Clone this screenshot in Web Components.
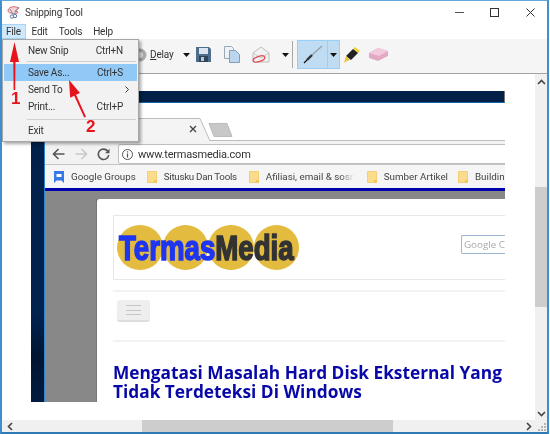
<!DOCTYPE html>
<html>
<head>
<meta charset="utf-8">
<title>Snipping Tool</title>
<style>
  html, body { margin: 0; background: #fff; }
  body { font-family: Roboto, "Open Sans", sans-serif; }
</style>
</head>
<body>

<snip-window>
  <title-bar slot="title">Snipping Tool</title-bar>
  <menu-bar slot="menu"></menu-bar>
  <snip-toolbar slot="toolbar"></snip-toolbar>
  <capture-view slot="canvas"></capture-view>
  <file-menu slot="overlay"></file-menu>
  <arrow-notes slot="overlay"></arrow-notes>
</snip-window>

<script>
class SnipWindow extends HTMLElement {
  constructor() {
    super();
    this.attachShadow({ mode: "open" });
  }

  connectedCallback() {
    this.shadowRoot.innerHTML = /* html */`
      <style>
        :host {
          display: block;
          position: relative;
          width: 549px;
          height: 434px;
          box-sizing: border-box;
          background: #fff;
          overflow: hidden;
          filter: blur(.3px);
          border-top: 1px solid #62a8e0;
          border-left: 2px solid #3f8fd0;
          border-right: 2px solid #3f8fd0;
          border-bottom: 2px solid #2f79b4;
        }
        .frame { display: flex; flex-direction: column; height: 100%; }
        .work {
          flex: 1;
          min-height: 0;
          display: grid;
          grid-template-columns: 1fr 12px;
          grid-template-rows: 1fr 12px;
        }
        .v, .h, .corner { background: #f0f0f0; position: relative; }
        .v { display: flex; flex-direction: column; align-items: center; justify-content: space-between; padding: 5px 0 3px; box-sizing: border-box; }
        .thumb-v { position: absolute; left: 0; right: 0; top: 113px; height: 120px; background: #cdcdcd; }
        .h { display: flex; align-items: center; justify-content: space-between; padding: 0 3px 0 5px; }
        .thumb-h { position: absolute; top: 0; bottom: 0; left: 140px; width: 251px; background: #cdcdcd; }
        svg { display: block; }
      </style>
      <div class="frame">
        <slot name="title"></slot>
        <slot name="menu"></slot>
        <slot name="toolbar"></slot>
        <div class="work">
          <slot name="canvas"></slot>
          <div class="v">
            <div class="thumb-v"></div>
            <svg width="9" height="6" viewBox="0 0 9 6"><path d="M1 5l3.500-3.500L8 5" fill="none" stroke="#444" stroke-width="1.600"/></svg>
            <svg width="9" height="6" viewBox="0 0 9 6"><path d="M1 1l3.500 3.500L8 1" fill="none" stroke="#444" stroke-width="1.600"/></svg>
          </div>
          <div class="h">
            <div class="thumb-h"></div>
            <svg width="6" height="9" viewBox="0 0 6 9"><path d="M5 1L1.500 4.500 5 8" fill="none" stroke="#444" stroke-width="1.600"/></svg>
            <svg width="6" height="9" viewBox="0 0 6 9"><path d="M1 1l3.500 3.500L1 8" fill="none" stroke="#444" stroke-width="1.600"/></svg>
          </div>
          <div class="corner">
            <svg width="12" height="12" viewBox="0 0 12 12" fill="#b5b5b5"><rect x="9" y="9" width="2" height="2"/><rect x="6" y="9" width="2" height="2"/><rect x="3" y="9" width="2" height="2"/><rect x="9" y="6" width="2" height="2"/><rect x="6" y="6" width="2" height="2"/><rect x="9" y="3" width="2" height="2"/></svg>
          </div>
        </div>
      </div>
      <slot name="overlay"></slot>
    `;
  }
}

class TitleBar extends HTMLElement {
  constructor() {
    super();
    this.attachShadow({ mode: "open" });
  }

  connectedCallback() {
    this.shadowRoot.innerHTML = /* html */`
      <style>
        :host {
          display: flex;
          align-items: center;
          height: 23px;
          padding: 0 12px 0 5px;
          font-size: 10px;
          letter-spacing: -.2px;
          color: #333;
        }
        .name { margin-left: 2px; flex: 1; }
        .btns { display: flex; align-items: center; }
        svg { display: block; }
      </style>
      <svg width="16" height="16" viewBox="0 0 16 16" fill="none">
        <path d="M1 5c2-4 7-4 11-2-1 1-3 2-4 3l3 1c-1 3-5 2-7 1C2 8 1 7 1 5z" fill="#f6d3d6" stroke="#d9606a" stroke-width="1"/>
        <circle cx="8" cy="11" r="1.700" stroke="#5a7fa8"/>
        <circle cx="5" cy="11.500" r="1.700" stroke="#5a7fa8"/>
        <path d="M7 9l5-7M6 9L3 4" stroke="#7d93a8"/>
      </svg>
      <span class="name"><slot></slot></span>
      <div class="btns">
        <svg width="9" height="9" viewBox="0 0 9 9"><path d="M0 4.500h9" stroke="#555" stroke-width="1"/></svg>
        <svg style="margin-left:26px" width="9" height="9" viewBox="0 0 9 9"><rect x=".5" y=".5" width="8" height="8" fill="none" stroke="#333"/></svg>
        <svg style="margin-left:27px" width="9" height="9" viewBox="0 0 9 9"><path d="M.5.500l8 8M8.500.500l-8 8" stroke="#333" stroke-width="1"/></svg>
      </div>
    `;
  }
}

class MenuBar extends HTMLElement {
  constructor() {
    super();
    this.attachShadow({ mode: "open" });
  }

  connectedCallback() {
    this.shadowRoot.innerHTML = /* html */`
      <style>
        :host {
          display: flex;
          height: 15px;
          font-size: 10px;
          letter-spacing: -.2px;
          color: #333;
          align-items: stretch;
        }
        span { padding: 0 5.500px; line-height: 15px; }
        .on {
          background: #cfe8fb;
          box-shadow: inset 0 0 0 1px #a6d5f8;
          margin-left: -1px;
          padding: 0;
          width: 25px;
          text-align: center;
        }
      </style>
      <span class="on">File</span>
      <span>Edit</span>
      <span>Tools</span>
      <span>Help</span>
    `;
  }
}

class SnipToolbar extends HTMLElement {
  constructor() {
    super();
    this.attachShadow({ mode: "open" });
  }

  connectedCallback() {
    const drop = `<svg class="drop" width="7" height="4" viewBox="0 0 7 4"><path d="M0 0h7L3.500 4z" fill="#111"/></svg>`;
    this.shadowRoot.innerHTML = /* html */`
      <style>
        :host {
          display: flex;
          align-items: center;
          height: 31px;
          padding: 0 0 3px 133px;
          background: #f5f5f5;
          border-bottom: 1px solid #a3a3a3;
          font-size: 10px;
          letter-spacing: -.2px;
          color: #333;
        }
        svg { display: block; flex: none; }
        u { text-decoration-thickness: 1px; }
        .delay { margin-left: 2px; width: 22px; white-space: nowrap; }
        .sep { width: 1px; height: 27px; background: #a9a9a9; margin: 0 4px 0 3px; }
        .pen {
          width: 29px;
          height: 27px;
          background: #bfdcf3;
          border: 1px solid #99cff6;
          display: flex;
          align-items: center;
          justify-content: center;
        }
        .pen-drop {
          width: 11px;
          height: 27px;
          background: #bfdcf3;
          border: 1px solid #99cff6;
          border-left: 0;
          display: flex;
          align-items: center;
          justify-content: center;
        }
      </style>
      <svg width="13" height="16" viewBox="0 0 13 16"><circle cx="5" cy="8" r="6.500" fill="#aaa"/><circle cx="5" cy="8" r="3" fill="#ddd"/></svg>
      <span class="delay"><u>D</u>elay</span>
      <span style="width:11px"></span>
      ${drop}
      <svg style="margin-left:6px" width="15" height="15" viewBox="0 0 15 15">
        <path d="M0 0h13l2 2v13H0z" fill="#4d6e8c"/>
        <rect x="3" y="1" width="9" height="6" fill="#d9e4ee"/>
        <rect x="3" y="9" width="9" height="6" fill="#2f4558"/>
        <rect x="5" y="10" width="3" height="4" fill="#b9c8d6"/>
      </svg>
      <svg style="margin-left:13px" width="16" height="17" viewBox="0 0 16 17">
        <path d="M.5.500h7l2 2v10h-9z" fill="#eef2f7" stroke="#9aa7b5"/>
        <path d="M5.500 4.500h6l4 4v8h-10z" fill="#bcd6ef" stroke="#7f9cb8"/>
      </svg>
      <svg style="margin-left:12px" width="19" height="17" viewBox="0 0 19 17" fill="none">
        <path d="M1 7l8-6 8 6v9H1z" fill="#f2f2f2" stroke="#bdbdbd"/>
        <path d="M1 7l8 5 8-5" stroke="#c8c8c8"/>
        <ellipse cx="7" cy="13" rx="6" ry="2.600" transform="rotate(-18 7 13)" stroke="#e24a55" stroke-width="1.300"/>
      </svg>
      <span style="width:11px"></span>
      ${drop}
      <span class="sep"></span>
      <div class="pen">
        <svg width="20" height="19" viewBox="0 0 20 19">
          <path d="M19 1L9 10" stroke="#9aa3ac" stroke-width="1.600"/>
          <path d="M9 10l-5 5" stroke="#333" stroke-width="2.400"/>
          <path d="M4 15l-3 3" stroke="#111" stroke-width="1.200"/>
        </svg>
      </div>
      <div class="pen-drop">${drop}</div>
      <svg style="margin-left:3px" width="18" height="18" viewBox="0 0 18 18">
        <path d="M12 1l5 4-2 2-5-4z" fill="#f2cf3c"/>
        <path d="M10 3l5 4-7 7-5-4z" fill="#222"/>
        <path d="M3 10l4 4-3 1-3 2z" fill="#e8c33a"/>
      </svg>
      <svg style="margin-left:8px" width="19" height="13" viewBox="0 0 19 13">
        <path d="M0 5l9-5 10 3v5l-10 5-9-3z" fill="#e3a9c4"/>
        <path d="M0 5l9-5 10 3-9 5z" fill="#f3c9dc"/>
      </svg>
    `;
  }
}

class FileMenu extends HTMLElement {
  constructor() {
    super();
    this.attachShadow({ mode: "open" });
  }

  connectedCallback() {
    this.shadowRoot.innerHTML = /* html */`
      <style>
        :host {
          position: absolute;
          left: 0;
          top: 38px;
          width: 137px;
          height: 103px;
          box-sizing: border-box;
          background: #f2f2f2;
          border: 1px solid #a6a6a6;
          box-shadow: 2px 2px 3px rgba(0,0,0,.35);
          font-size: 10px;
          letter-spacing: -.2px;
          color: #333;
          padding-top: 2px;
        }
        .row {
          display: flex;
          justify-content: space-between;
          align-items: center;
          height: 17px;
          padding: 0 15px 0 25px;
          position: relative;
        }
        .on { background: #90c8f6; margin: 0 1px; padding: 0 14px 0 24px; }
        .sep { height: 1px; background: #d0d0d0; margin: 2px 2px 2px 24px; }
        .chev { position: absolute; right: 9px; top: 5px; }
      </style>
      <div class="row"><span>New Snip</span><span>Ctrl+N</span></div>
      <div class="sep"></div>
      <div class="row on"><span>Save As...</span><span>Ctrl+S</span></div>
      <div class="row"><span>Send To</span><svg class="chev" width="4" height="7" viewBox="0 0 4 7"><path d="M.5.500l3 3-3 3" fill="none" stroke="#333"/></svg></div>
      <div class="row"><span>Print...</span><span>Ctrl+P</span></div>
      <div class="sep" style="margin-top:4px"></div>
      <div class="row"><span>Exit</span></div>
    `;
  }
}

class BookmarkItem extends HTMLElement {
  constructor() {
    super();
    this.attachShadow({ mode: "open" });
  }

  connectedCallback() {
    this.shadowRoot.innerHTML = /* html */`
      <style>
        :host { display: flex; align-items: center; gap: 7px; white-space: nowrap; flex: none; }
        svg { display: block; flex: none; }
      </style>
      <svg width="10" height="12" viewBox="0 0 10 12"><path d="M.5.500h9v11h-9z" fill="#fbdc8c" stroke="#f4cf72"/><path d="M7 9h2.500v2.500H7z" fill="#f2c34f"/></svg>
      <slot></slot>
    `;
  }
}

class BrowserChrome extends HTMLElement {
  constructor() {
    super();
    this.attachShadow({ mode: "open" });
  }

  connectedCallback() {
    this.shadowRoot.innerHTML = /* html */`
      <style>
        :host { display: block; color: #444; font-size: 9.800px; }
        svg { display: block; flex: none; }
        .tabs {
          height: 38px;
          position: relative;
          border-bottom: 1px solid #bdbdbd;
          box-sizing: border-box;
        }
        .tab { position: absolute; left: 0; top: 15px; }
        .nav {
          height: 24px;
          background: #f2f2f2;
          display: flex;
          align-items: center;
          padding: 3px 0 0 7px;
          border-bottom: 1px solid #c4c4c4;
          box-sizing: border-box;
          overflow: hidden;
        }
        .addr {
          margin-left: 8px;
          flex: 1;
          height: 20px;
          margin-right: -20px;
          background: #fff;
          border: 1px solid #bfbfbf;
          border-radius: 2px;
          display: flex;
          align-items: center;
          padding-left: 3px;
          gap: 5px;
          font-size: 11px;
          letter-spacing: -.2px;
          color: #333;
          box-sizing: border-box;
        }
        .marks {
          height: 23px;
          background: #f5f5f5;
          display: flex;
          align-items: center;
          padding-left: 9px;
          overflow: hidden;
          white-space: nowrap;
        }
        .tight { letter-spacing: -.3px; }
        .fade {
          -webkit-mask-image: linear-gradient(90deg, #000 85%, transparent);
          mask-image: linear-gradient(90deg, #000 85%, transparent);
          display: block;
          width: 88px;
          overflow: hidden;
        }
        .rule { height: 3px; background: #0000ac; }
      </style>
      <div class="tabs">
        <svg class="tab" width="200" height="23" viewBox="0 0 200 23" fill="none">
          <path d="M0 .5h155L165 23H0z" fill="#f4f4f4"/>
          <path d="M0 .5h155L165 23" stroke="#bdbdbd"/>
          <path d="M145 8l6 6M151 8l-6 6" stroke="#444" stroke-width="1.300"/>
          <path d="M164 5.500h18l5 13h-18z" fill="#c8c8c8" stroke="#bcbcbc" stroke-linejoin="round"/>
        </svg>
      </div>
      <div class="nav">
        <svg width="13" height="12" viewBox="0 0 13 12"><path d="M12.500 6H2M6.500 1L1.500 6l5 5" fill="none" stroke="#555" stroke-width="1.600"/></svg>
        <svg style="margin-left:10px" width="13" height="12" viewBox="0 0 13 12"><path d="M.5 6H11M6.500 1l5 5-5 5" fill="none" stroke="#c9c9c9" stroke-width="1.600"/></svg>
        <svg style="margin-left:9px" width="13" height="13" viewBox="0 0 13 13"><path d="M11 3.600A5.200 5.200 0 1 0 11.700 7" fill="none" stroke="#555" stroke-width="1.600"/><path d="M12.500 .8v4.400H8z" fill="#555"/></svg>
        <div class="addr">
          <svg width="11" height="11" viewBox="0 0 11 11"><circle cx="5.500" cy="5.500" r="5" fill="none" stroke="#555"/><path d="M5.500 4.500V8.500M5.500 2.300v1.200" stroke="#555" stroke-width="1.200"/></svg>
          <span>www.termasmedia.com</span>
        </div>
      </div>
      <div class="marks">
        <svg width="10" height="12" viewBox="0 0 10 12" style="margin-right:7px"><path d="M0 0h10v12L7.500 9.500h-5L0 12z" fill="#3b78e7"/><rect x="2.500" y="3" width="5" height="3" fill="#fff"/></svg>
        <span>Google Groups</span>
        <bookmark-item style="margin-left:11px"><span class="tight">Situsku Dan Tools</span></bookmark-item>
        <bookmark-item style="margin-left:12px"><span class="fade">Afiliasi, email &amp; sosm</span></bookmark-item>
        <bookmark-item style="margin-left:13px">Sumber Artikel</bookmark-item>
        <bookmark-item style="margin-left:10px">Building</bookmark-item>
      </div>
      <div class="rule"></div>
    `;
  }
}

class SiteLogo extends HTMLElement {
  constructor() {
    super();
    this.attachShadow({ mode: "open" });
  }

  connectedCallback() {
    this.shadowRoot.innerHTML = /* html */`
      <style>
        :host { display: block; position: relative; height: 65px; border: 1px solid #e8e8e8; border-right: 0; box-sizing: border-box; }
        .dots { display: flex; padding: 9px 0 0 3px; }
        .dots i { width: 45.500px; height: 45px; border-radius: 50%; background: #e3bc3f; flex: none; }
        .word {
          position: absolute;
          left: 5px;
          top: 11px;
          font: bold 35px/41px "Liberation Sans", sans-serif;
          transform: scaleX(.79);
          transform-origin: 0 0;
          -webkit-text-stroke: 1.600px currentColor;
          white-space: nowrap;
          color: #333;
        }
        .word b { color: #1f35f0; font-weight: bold; }
      </style>
      <div class="dots"><i></i><i></i><i></i><i></i></div>
      <div class="word"><b>Termas</b>Media</div>
    `;
  }
}

class CaptureView extends HTMLElement {
  constructor() {
    super();
    this.attachShadow({ mode: "open" });
  }

  connectedCallback() {
    this.shadowRoot.innerHTML = /* html */`
      <style>
        :host {
          display: block;
          background: #fff;
          padding: 17px 0 0 29px;
          overflow: hidden;
        }
        .shot {
          width: 474px;
          height: 311px;
          display: flex;
          flex-direction: column;
          overflow: hidden;
        }
        .top { height: 12px; background: #022048; border-bottom: 1px solid #1464a8; border-right: 1px solid #777; box-sizing: border-box; flex: none; }
        .row { flex: 1; display: flex; min-height: 0; }
        .strip { width: 14px; flex: none; background: linear-gradient(#022048, #012350 70%, #011532 85%, #011c40); border-right: 1px solid #2d86cf; box-sizing: border-box; }
        .main { flex: 1; min-width: 0; display: flex; flex-direction: column; }
        .page { flex: 1; display: flex; background: #888; padding-top: 8px; min-height: 0; }
        .gutter { width: 52px; flex: none; border-right: 1px solid #777; box-sizing: border-box; }
        .card {
          flex: 1;
          min-width: 0;
          background: #fff;
          border-radius: 3px 0 0 0;
          padding: 16px 0 0 16px;
          overflow: hidden;
        }
        .head { position: relative; }
        .search {
          position: absolute;
          right: 0;
          top: 20px;
          width: 44px;
          height: 19px;
          border: 1px solid #9db6d2;
          border-right: 0;
          border-radius: 2px 0 0 2px;
          font: 9.800px/18px "Open Sans", sans-serif;
          color: #aaa;
          padding-left: 2px;
          overflow: hidden;
          box-sizing: border-box;
          white-space: nowrap;
        }
        .line { height: 2px; background: #f2f2f2; }
        .bar { height: 48px; padding: 8px 0 0 4px; box-sizing: border-box; }
        .burger {
          width: 33px;
          height: 22px;
          background: #eee;
          border-radius: 3px;
          border-bottom: 2px solid #ddd;
          box-sizing: border-box;
          display: flex;
          flex-direction: column;
          gap: 3.500px;
          align-items: center;
          justify-content: center;
        }
        .burger i { width: 15px; height: 1px; background: #c6c6c6; display: block; }
        h1 {
          margin: 21px 0 0;
          font: bold 17.300px/19px "Open Sans", sans-serif;
          color: #0808a8;
          white-space: nowrap;
        }
      </style>
      <div class="shot">
        <div class="top"></div>
        <div class="row">
          <div class="strip"></div>
          <div class="main">
            <browser-chrome></browser-chrome>
            <div class="page">
              <div class="gutter"></div>
              <div class="card">
                <div class="head">
                  <site-logo></site-logo>
                  <div class="search">Google C</div>
                </div>
                <div class="line" style="margin-top:10px"></div>
                <div class="bar"><div class="burger"><i></i><i></i><i></i></div></div>
                <div class="line"></div>
                <h1>Mengatasi Masalah Hard Disk Eksternal Yang<br>Tidak Terdeteksi Di Windows</h1>
              </div>
            </div>
          </div>
        </div>
      </div>
    `;
  }
}

class ArrowNotes extends HTMLElement {
  constructor() {
    super();
    this.attachShadow({ mode: "open" });
  }

  connectedCallback() {
    this.shadowRoot.innerHTML = /* html */`
      <style>
        :host { position: absolute; left: -2px; top: -1px; width: 550px; height: 434px; pointer-events: none; }
        svg { position: absolute; left: 0; top: 0; }
        b {
          position: absolute;
          font: bold 17px/18px "Liberation Sans", sans-serif;
          color: #e8141c;
        }
      </style>
      <svg width="550" height="434" viewBox="0 0 550 434">
        <path d="M14.500 42l4.500 20h-3.500l-.3 28h-1.600l-.3-28H10z" fill="#e8141c"/>
        <path d="M69 80l11 13-4 1.800 10 22-1.800 .8-10-21.800-4 2z" fill="#e8141c"/>
      </svg>
      <b style="left:11px;top:90px">1</b>
      <b style="left:86px;top:118px">2</b>
    `;
  }
}

customElements.define("snip-window", SnipWindow);
customElements.define("title-bar", TitleBar);
customElements.define("menu-bar", MenuBar);
customElements.define("snip-toolbar", SnipToolbar);
customElements.define("file-menu", FileMenu);
customElements.define("bookmark-item", BookmarkItem);
customElements.define("browser-chrome", BrowserChrome);
customElements.define("site-logo", SiteLogo);
customElements.define("capture-view", CaptureView);
customElements.define("arrow-notes", ArrowNotes);
</script>
</body>
</html>
